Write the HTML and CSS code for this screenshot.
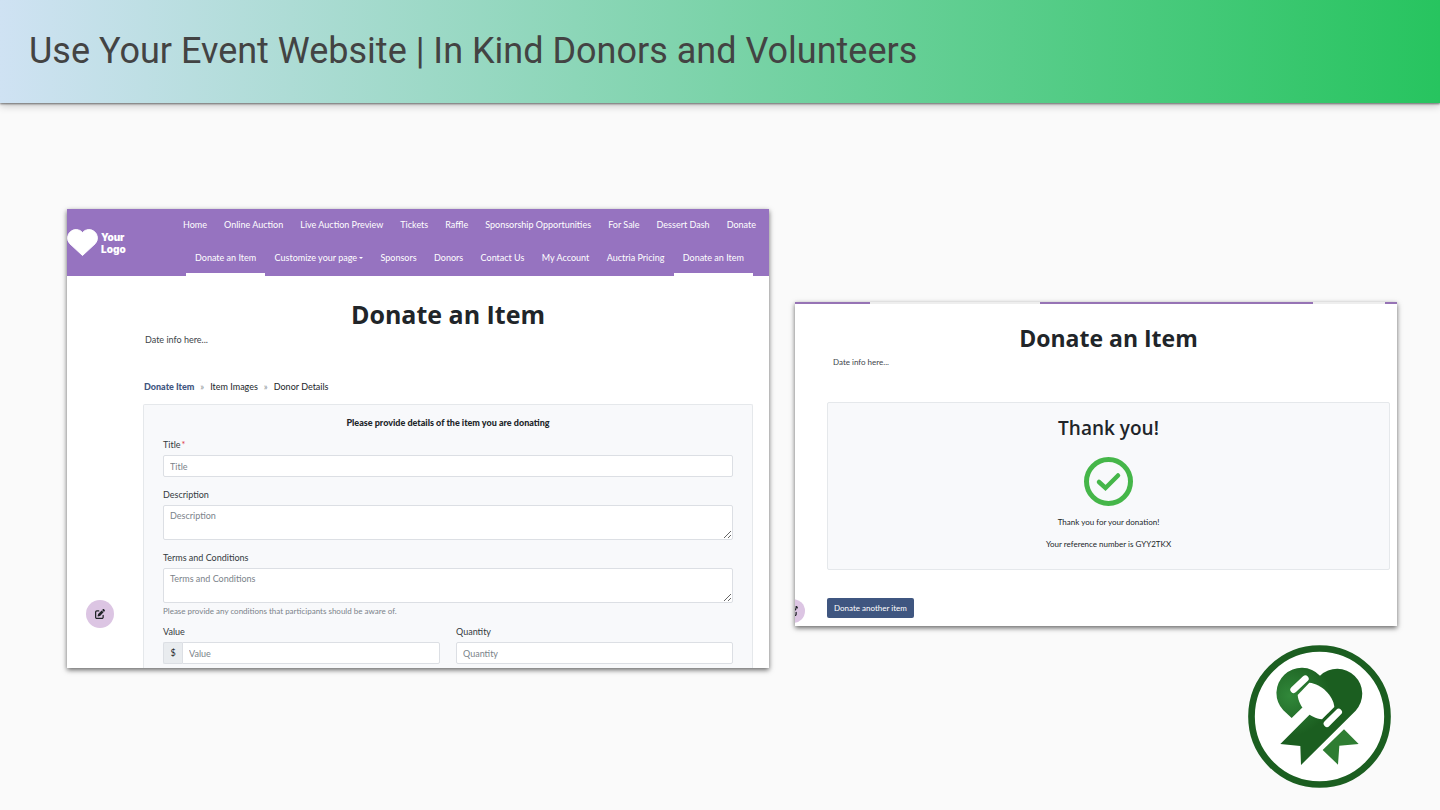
FILE: index.html
```html
<!DOCTYPE html>
<html lang="en">
<head>
<meta charset="utf-8">
<title>Use Your Event Website | In Kind Donors and Volunteers</title>
<link rel="stylesheet" href="styles.css">
</head>
<body>
<header class="banner"><h1 class="banner-title">Use Your Event Website | In Kind Donors and Volunteers</h1></header>
<main class="stage">
  <section class="shot form-shot">
    <div class="site-header">
      <a class="brand" href="#">
        <svg class="brand-heart" viewBox="0 0 31 27" aria-hidden="true"><path d="M15.500 26.500L2.600 14.500A8.300 8.300 0 0 1 15.500 3.500A8.300 8.300 0 0 1 28.400 14.500Z" fill="#fff" stroke="#fff"/></svg>
        <span>Your<br>Logo</span>
      </a>
      <nav class="site-nav">
        <div class="nav-row">
          <a href="#">Home</a><a href="#">Online Auction</a><a href="#">Live Auction Preview</a><a href="#">Tickets</a><a href="#">Raffle</a><a href="#">Sponsorship Opportunities</a><a href="#">For Sale</a><a href="#">Dessert Dash</a><a href="#">Donate</a>
        </div>
        <div class="nav-row nav-row-second">
          <a class="active" href="#">Donate an Item</a><a class="has-menu" href="#">Customize your page</a><a href="#">Sponsors</a><a href="#">Donors</a><a href="#">Contact Us</a><a href="#">My Account</a><a href="#">Auctria Pricing</a><a class="active" href="#">Donate an Item</a>
        </div>
      </nav>
    </div>
    <div class="page">
      <h2 class="page-title">Donate an Item</h2>
      <p class="date">Date info here...</p>
      <div class="steps"><strong>Donate Item</strong><span class="sep">»</span><span>Item Images</span><span class="sep">»</span><span>Donor Details</span></div>
      <form class="card">
        <p class="card-caption">Please provide details of the item you are donating</p>
        <div class="field">
          <label for="title">Title<span class="required">*</span></label>
          <input id="title" type="text" placeholder="Title">
        </div>
        <div class="field">
          <label for="description">Description</label>
          <textarea id="description" placeholder="Description"></textarea>
        </div>
        <div class="field">
          <label for="terms">Terms and Conditions</label>
          <textarea id="terms" placeholder="Terms and Conditions"></textarea>
          <small>Please provide any conditions that participants should be aware of.</small>
        </div>
        <div class="field-pair">
          <div class="field">
            <label for="value">Value</label>
            <div class="input-group"><span class="prefix">$</span><input id="value" type="text" placeholder="Value"></div>
          </div>
          <div class="field">
            <label for="quantity">Quantity</label>
            <input id="quantity" type="text" placeholder="Quantity">
          </div>
        </div>
      </form>
    </div>
    <button class="edit-button" type="button" aria-label="Edit">
      <svg viewBox="0 0 512 512" aria-hidden="true"><path d="M471.600 21.700c-21.900-21.900-57.300-21.900-79.200 0L362.300 51.700l97.900 97.900 30.100-30.100c21.900-21.900 21.900-57.300 0-79.200L471.600 21.700zm-299.200 220c-6.100 6.100-10.800 13.600-13.500 21.900l-29.600 88.800c-2.900 8.600-.6 18.100 5.800 24.600s15.900 8.700 24.600 5.800l88.800-29.600c8.200-2.700 15.700-7.400 21.900-13.500L437.700 172.300 339.700 74.300 172.400 241.700zM96 64C43 64 0 107 0 160V416c0 53 43 96 96 96H352c53 0 96-43 96-96V320c0-17.700-14.300-32-32-32s-32 14.300-32 32v96c0 17.700-14.300 32-32 32H96c-17.700 0-32-14.300-32-32V160c0-17.700 14.300-32 32-32h96c17.700 0 32-14.300 32-32s-14.300-32-32-32H96z"/></svg>
    </button>
  </section>
  <div class="side">
    <section class="shot thanks-shot">
      <div class="nav-edge"></div>
      <div class="page">
        <h2 class="page-title">Donate an Item</h2>
        <p class="date">Date info here...</p>
        <div class="card thanks">
          <h3>Thank you!</h3>
          <svg class="check" viewBox="0 0 50 50" fill="none" stroke="#45b649" aria-hidden="true"><circle cx="24.500" cy="24.500" r="22" stroke-width="5"/><path d="M15 25L21.500 31L34 18.500" stroke-width="4.500" stroke-linecap="round"/></svg>
          <p>Thank you for your donation!</p>
          <p>Your reference number is GYY2TKX</p>
        </div>
        <button class="another" type="button">Donate another item</button>
      </div>
      <button class="edit-button" type="button" aria-label="Edit">
        <svg viewBox="0 0 512 512" aria-hidden="true"><path d="M471.600 21.700c-21.900-21.900-57.300-21.900-79.200 0L362.300 51.700l97.900 97.900 30.100-30.100c21.900-21.900 21.900-57.300 0-79.200L471.600 21.700zm-299.200 220c-6.100 6.100-10.800 13.600-13.500 21.900l-29.600 88.800c-2.900 8.600-.6 18.100 5.800 24.600s15.900 8.700 24.600 5.800l88.800-29.600c8.200-2.700 15.700-7.400 21.900-13.500L437.700 172.300 339.700 74.300 172.400 241.700zM96 64C43 64 0 107 0 160V416c0 53 43 96 96 96H352c53 0 96-43 96-96V320c0-17.700-14.300-32-32-32s-32 14.300-32 32v96c0 17.700-14.300 32-32 32H96c-17.700 0-32-14.300-32-32V160c0-17.700 14.300-32 32-32h96c17.700 0 32-14.300 32-32s-14.300-32-32-32H96z"/></svg>
      </button>
    </section>
    <svg class="badge" viewBox="24 28 429 429" role="img" aria-label="Auction logo">
      <defs><radialGradient id="leaf" gradientUnits="userSpaceOnUse" cx="150" cy="180" r="120"><stop offset="0" stop-color="#31883a"/><stop offset="1" stop-color="#1b5e20"/></radialGradient></defs>
      <circle cx="238.500" cy="242.500" r="204" fill="#fff" stroke="#1b5e20" stroke-width="20"/>
      <path d="M240 120A75 75 0 0 1 347 225L183 388L181 331L121 325L210 236L188 215L155 247L130 224A75 75 0 0 1 240 120Z" fill="url(#leaf)"/>
      <path d="M173 178L208 141C245 145 280 180 283 214L246 251C210 248 176 215 173 178Z" fill="#fff"/>
      <path d="M161 162L196 129M261 264L296 229" stroke="#fff" stroke-width="20" stroke-linecap="round"/>
      <path d="M312 281L356 325L298 330L294 387L248 343Z" fill="#2e7d32"/>
    </svg>
  </div>
</main>
</body>
</html>
```

FILE: styles.css
```css
* { box-sizing: border-box; }

body {
  margin: 0;
  background: #fafafa;
  color: #212529;
  font: 9px/14px Lato, "Open Sans", sans-serif;
}

h1, h2, h3, p { margin: 0; }
a { color: inherit; text-decoration: none; }
button, input, textarea { font: inherit; }

.banner {
  padding: 30px 29px 31px;
  background: linear-gradient(90deg, #cfe2f3, #27c45f);
  box-shadow: 0 1px 2px rgba(0, 0, 0, .5), 0 3px 8px rgba(0, 0, 0, .2);
}

.banner-title {
  color: #434343;
  font: 400 36px/42px Roboto, sans-serif;
}

.stage {
  display: grid;
  grid-template-columns: minmax(0, 351fr) minmax(0, 301fr);
  gap: 26px;
  align-items: start;
  padding: 106px 43px 0 67px;
}

.side {
  display: flex;
  flex-direction: column;
  gap: 19px;
  padding-top: 93px;
}

.shot {
  position: relative;
  background: #fff;
  box-shadow: 0 2px 5px rgba(0, 0, 0, .6);
}

.site-header {
  display: flex;
  align-items: center;
  background: #9673c0;
  color: #fff;
}

.brand {
  display: flex;
  flex: 0 0 108px;
  align-items: center;
  gap: 3px;
  font: 900 10px/12px Inter, sans-serif;
}

.brand-heart { width: 31px; height: 27px; }

.site-nav { flex: 1; padding-right: 5px; }

.nav-row { display: flex; justify-content: space-between; }
.nav-row a { padding: 9px 8px 10px; white-space: nowrap; }
.nav-row-second { padding: 0 11px; }
.nav-row-second a { padding-bottom: 8px; border-bottom: 3px solid transparent; }
.nav-row-second .active { padding-right: 9px; padding-left: 9px; border-color: #fff; }

.has-menu::after {
  content: "";
  display: inline-block;
  margin-left: 2px;
  vertical-align: 2px;
  border: 2px solid transparent;
  border-top-color: currentColor;
  border-bottom: 0;
}

.page { padding: 21px 16px 0 76px; }

.page-title {
  font-family: "Open Sans", sans-serif;
  font-size: 25px;
  font-weight: 700;
  line-height: 34px;
  text-align: center;
}

.date { padding: 2px; color: #40454a; }

.steps {
  display: flex;
  gap: 6px;
  margin: 31px 1px 10px;
}

.steps strong { color: #3f5680; font-weight: 900; }
.sep { color: #868e96; }

.card {
  padding: 11px 19px 4px;
  border: 1px solid #e5e8eb;
  border-bottom: 0;
  border-radius: 2px 2px 0 0;
  background: #f8f9fb;
}

.card-caption { margin-bottom: 8px; font-weight: 900; text-align: center; }

.field { display: flex; flex-direction: column; margin-bottom: 11px; }
.field label { margin-bottom: 3px; color: #343a40; }
.required { margin-left: 1px; color: #dc3545; }

.field input, .field textarea {
  width: 100%;
  padding: 3px 6px;
  border: 1px solid #dcdfe4;
  border-radius: 2px;
  outline: 0;
  background: #fff;
  color: #495057;
}

.field input { height: 22px; }
.field textarea { display: block; height: 35px; resize: vertical; }
::placeholder { color: #7b838a; opacity: 1; }

.field small { margin: 1px 0 -4px; color: #7b838a; font-size: 8px; }

.field-pair {
  display: grid;
  grid-template-columns: 1fr 1fr;
  gap: 16px;
}

.field-pair .field { margin-bottom: 0; }

.input-group { display: flex; }
.input-group input { border-radius: 0 2px 2px 0; }

.prefix {
  flex: 0 0 19px;
  padding: 3px 0;
  border: 1px solid #dcdfe4;
  border-right: 0;
  border-radius: 2px 0 0 2px;
  background: #e9ecef;
  text-align: center;
}

.edit-button {
  position: absolute;
  bottom: 40px;
  left: 19px;
  display: grid;
  width: 28px;
  height: 28px;
  padding: 0;
  place-items: center;
  border: 0;
  border-radius: 50%;
  background: #dcc5e3;
  color: #212529;
}

.edit-button svg { width: 10px; height: 10px; fill: currentColor; }

.thanks-shot { overflow: hidden; font-size: 8px; }

.nav-edge {
  height: 2px;
  background: linear-gradient(90deg, #9673b5 12.5%, #eee 12.5% 40.7%, #9673b5 40.7% 86%, #eee 86% 98%, #9673b5 98%);
}

.thanks-shot .page { padding: 19px 7px 8px 32px; }
.thanks-shot .page-title { font-size: 23px; line-height: 30px; }
.thanks-shot .date { padding: 2px 6px; }

.thanks {
  display: flex;
  flex-direction: column;
  align-items: center;
  gap: 8px;
  margin: 31px 0 28px;
  padding-bottom: 18px;
  border-bottom: 1px solid #e5e8eb;
  border-radius: 2px;
}

.thanks h3 {
  font-family: "Open Sans", sans-serif;
  font-size: 19px;
  font-weight: 600;
  line-height: 28px;
}

.check { width: 50px; height: 50px; margin-top: 7px; }

.another {
  display: block;
  height: 20px;
  padding: 0 7px;
  border: 0;
  border-radius: 2px;
  background: #3f5680;
  color: #fff;
}

.thanks-shot .edit-button { bottom: 3px; left: -14px; width: 24px; height: 24px; }

.badge {
  align-self: flex-end;
  width: 143px;
  height: 143px;
  margin-right: 6px;
}
```
